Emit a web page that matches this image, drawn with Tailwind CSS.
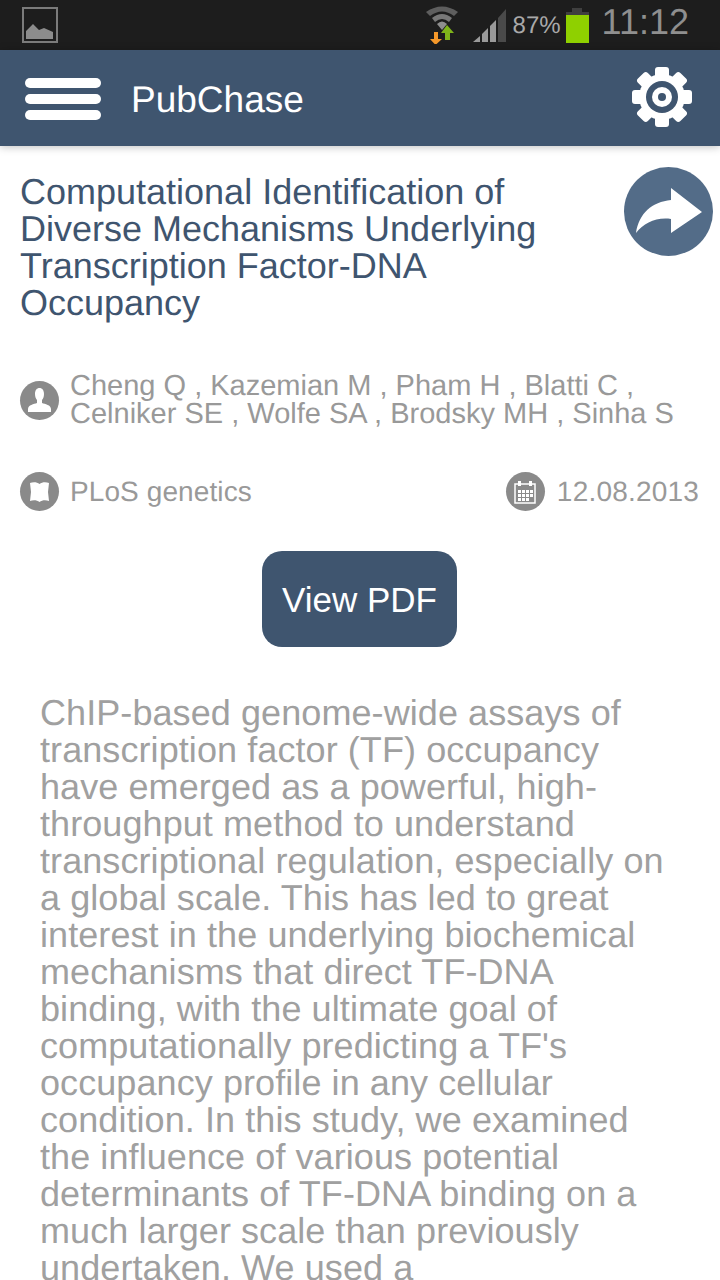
<!DOCTYPE html>
<html lang="en">
  <head>
    <meta charset="UTF-8" />
    <meta name="viewport" content="width=device-width, initial-scale=1.0" />
    <title>PubChase</title>
    <script src="https://cdn.jsdelivr.net/npm/@tailwindcss/browser@4"></script>
  </head>
  <body class="bg-white h-[1280px] overflow-hidden font-['Liberation_Sans',Arial,sans-serif] [text-rendering:geometricPrecision]">
    <!-- Status bar -->
    <div class="h-[50px] bg-[#1d1d1d] flex items-center pl-[22px] pr-[31px]">
      <svg class="w-[37px] h-[37px]" viewBox="0 0 37 37">
        <rect x="1" y="1" width="34" height="34" fill="none" stroke="#7b7b7b" stroke-width="2" />
        <path d="M4 32V24L11 17L17 23L22 21L31 25V32Z" fill="#8c8c8c" />
      </svg>
      <svg class="ml-auto w-[34px] h-[40px] mt-[-3px] mr-[14px]" viewBox="0 0 34 40">
        <path d="M1 8Q17 -3 33 8L29 12Q17 3 5 12Z" fill="#5e5e5e" />
        <path d="M7 14Q17 6 27 14L24 18Q17 12 10 18Z" fill="#787878" />
        <path d="M12 20Q17 15 22 20L17 26Z" fill="#8e8e8e" />
        <path d="M9 28H13V35H17L10.500 41L5 35H9Z" fill="#f4982a" />
        <path d="M20 36V29H16L22 21L29 29H25V36Z" fill="#7fb51a" />
      </svg>
      <svg class="w-[34px] h-[34px] mt-[2px]" viewBox="0 0 34 34">
        <path d="M0 33L7 27V33Z" fill="#9a9a9a" />
        <path d="M9 25L15 19V33H9Z" fill="#9a9a9a" />
        <path d="M17 17L23 11V33H17Z" fill="#9a9a9a" />
        <path d="M25 9L33 0V33H25Z" fill="#4a4a4a" />
      </svg>
      <span class="ml-[6px] text-[24px] text-[#a9a9a9] leading-none mt-[1px]">87%</span>
      <div class="ml-[5px] flex flex-col items-center">
        <div class="w-[10px] h-[4px] bg-[#3f3f3f]"></div>
        <div class="w-[23px] h-[3px] bg-[#3f3f3f]"></div>
        <div class="w-[23px] h-[28px] bg-[#8fd000]"></div>
      </div>
      <span class="ml-[13px] text-[36px] text-[#8f8f8f] leading-none mt-[-7px]">11:12</span>
    </div>

    <!-- Header -->
    <header class="h-[96px] bg-[#3f556f] flex items-center pl-[25px] pr-[28px] shadow-[0_1px_8px_rgba(0,0,0,0.25)] relative">
      <div class="w-[76px] flex flex-col gap-[6px] mt-[2px]">
        <div class="h-[10px] rounded-full bg-white"></div>
        <div class="h-[10px] rounded-full bg-white"></div>
        <div class="h-[10px] rounded-full bg-white"></div>
      </div>
      <h1 class="ml-[30px] text-[37px] text-white leading-none mt-[2px]">PubChase</h1>
      <svg class="ml-auto w-[60px] h-[60px] mt-[-2px]" viewBox="0 0 60 60">
        <g fill="#fff">
          <rect x="23" y="0" width="14" height="60" rx="3" />
          <rect x="23" y="0" width="14" height="60" rx="3" transform="rotate(45 30 30)" />
          <rect x="23" y="0" width="14" height="60" rx="3" transform="rotate(90 30 30)" />
          <rect x="23" y="0" width="14" height="60" rx="3" transform="rotate(135 30 30)" />
          <circle cx="30" cy="30" r="23" />
        </g>
        <circle cx="30" cy="30" r="16" fill="#3f556f" />
        <circle cx="30" cy="30" r="10" fill="#fff" />
        <circle cx="30" cy="30" r="4" fill="#3f556f" />
      </svg>
    </header>

    <main>
      <!-- Title -->
      <div class="flex items-start pl-[20px] pr-[7px] pt-[27px]">
        <h2 class="flex-1 text-[36px] leading-[37px] text-[#3f556f]">Computational Identification of<br />Diverse Mechanisms Underlying<br />Transcription Factor-DNA<br />Occupancy</h2>
        <svg class="w-[89px] h-[89px] mt-[-6px] shrink-0" viewBox="0 0 89 89">
          <circle cx="44.500" cy="44.500" r="44.500" fill="#536c88" />
          <path fill="#fff" d="M78 45L47 21V33C28 35 15 46 12 66C20 56 32 50 47 52V66Z" />
        </svg>
      </div>

      <!-- Authors -->
      <div class="flex items-center pl-[20px] mt-[51px]">
        <div class="w-[39px] h-[39px] rounded-full bg-[#8a8a8a] flex items-center justify-center shrink-0">
          <svg class="w-[25px] h-[25px]" viewBox="0 0 25 25">
            <path fill="#fff" d="M8 6C8 2 10 0 12.500 0C15 0 17 2 17 6C17 9 16 11 15 12V15C18 16 24 17 24 21V24H1V21C1 17 7 16 10 15V12C9 11 8 9 8 6Z" />
          </svg>
        </div>
        <p class="ml-[11px] text-[29px] leading-[28px] text-[#999999] whitespace-nowrap">Cheng Q , Kazemian M , Pham H , Blatti C ,<br />Celniker SE , Wolfe SA , Brodsky MH , Sinha S</p>
      </div>

      <!-- Journal and date -->
      <div class="flex items-center justify-between pl-[20px] pr-[21px] mt-[44px]">
        <div class="flex items-center">
          <div class="w-[39px] h-[39px] rounded-full bg-[#8a8a8a] flex items-center justify-center">
            <svg class="w-[23px] h-[22px]" viewBox="0 0 23 22">
              <path fill="#fff" d="M2 2C5 1 9 1 11.500 3C14 1 18 1 21 2L20 11L21 20C18 19 14 19 11.500 21C9 19 5 19 2 20L3 11Z" />
            </svg>
          </div>
          <span class="ml-[11px] text-[28px] tracking-[0.1px] text-[#999999] leading-none">PLoS genetics</span>
        </div>
        <div class="flex items-center">
          <div class="w-[39px] h-[39px] rounded-full bg-[#8a8a8a] flex items-center justify-center">
            <svg class="w-[24px] h-[24px]" viewBox="0 0 24 24">
              <path fill="none" stroke="#fff" stroke-width="1.500" d="M2 4H22V23H2Z" />
              <path fill="#fff" d="M5 1H8V6H5ZM16 1H19V6H16ZM5 10H8V13H5ZM9 10H12V13H9ZM13 10H16V13H13ZM17 10H20V13H17ZM5 14H8V17H5ZM9 14H12V17H9ZM13 14H16V17H13ZM17 14H20V17H17ZM5 18H8V21H5ZM9 18H12V21H9ZM13 18H16V21H13Z" />
            </svg>
          </div>
          <span class="ml-[12px] text-[28px] tracking-[0.2px] text-[#999999] leading-none">12.08.2013</span>
        </div>
      </div>

      <!-- PDF button -->
      <div class="flex justify-center mt-[40px]">
        <button class="w-[195px] h-[96px] pt-[3px] mr-[1px] rounded-[20px] bg-[#3f556f] text-white text-[35px]">View PDF</button>
      </div>

      <!-- Abstract -->
      <p class="pl-[40px] mt-[47px] text-[36px] leading-[37px] tracking-[0.08px] text-[#a0a0a0] whitespace-nowrap">ChIP-based genome-wide assays of<br />transcription factor (TF) occupancy<br />have emerged as a powerful, high-<br />throughput method to understand<br />transcriptional regulation, especially on<br />a global scale. This has led to great<br />interest in the underlying biochemical<br />mechanisms that direct TF-DNA<br />binding, with the ultimate goal of<br />computationally predicting a TF's<br />occupancy profile in any cellular<br />condition. In this study, we examined<br />the influence of various potential<br />determinants of TF-DNA binding on a<br />much larger scale than previously<br />undertaken. We used a</p>
    </main>
  </body>
</html>
